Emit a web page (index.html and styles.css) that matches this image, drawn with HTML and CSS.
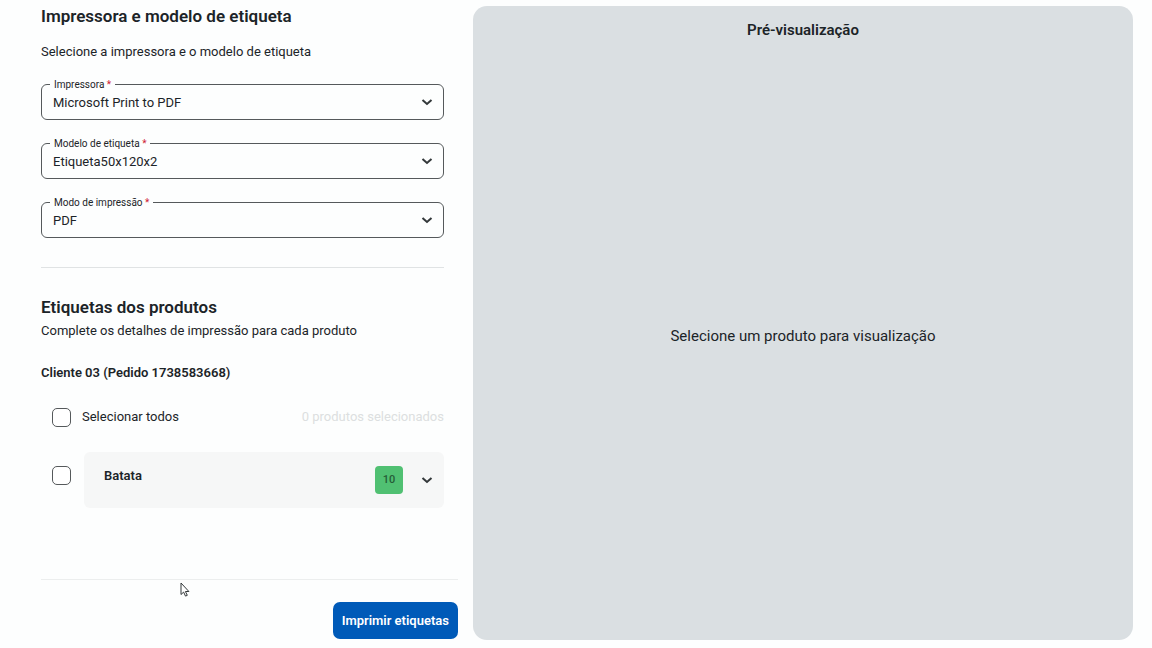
FILE: index.html
```html
<!DOCTYPE html>
<html lang="pt-BR">
<head>
    <meta charset="UTF-8">
    <meta name="viewport" content="width=device-width, initial-scale=1.0">
    <title>Imprimir etiquetas</title>
    <link rel="stylesheet" href="styles.css">
</head>
<body>
    <main class="page">
        <form class="settings">
            <div class="settings-content">
                <section class="printer">
                    <h1>Impressora e modelo de etiqueta</h1>
                    <p class="printer-intro">Selecione a impressora e o modelo de etiqueta</p>
                    <div class="fields">
                        <fieldset class="field">
                            <legend><label for="printer">Impressora <span class="required">*</span></label></legend>
                            <select id="printer" required>
                                <option>Microsoft Print to PDF</option>
                            </select>
                            <svg class="chevron" viewBox="0 0 12 12"><path d="M1.5 4L6 8l4.500-4"/></svg>
                        </fieldset>
                        <fieldset class="field">
                            <legend><label for="template">Modelo de etiqueta <span class="required">*</span></label></legend>
                            <select id="template" required>
                                <option>Etiqueta50x120x2</option>
                            </select>
                            <svg class="chevron" viewBox="0 0 12 12"><path d="M1.5 4L6 8l4.500-4"/></svg>
                        </fieldset>
                        <fieldset class="field">
                            <legend><label for="mode">Modo de impressão <span class="required">*</span></label></legend>
                            <select id="mode" required>
                                <option>PDF</option>
                            </select>
                            <svg class="chevron" viewBox="0 0 12 12"><path d="M1.5 4L6 8l4.500-4"/></svg>
                        </fieldset>
                    </div>
                </section>

                <section class="products">
                    <h2>Etiquetas dos produtos</h2>
                    <p>Complete os detalhes de impressão para cada produto</p>
                    <h3>Cliente 03 (Pedido 1738583668)</h3>
                    <div class="select-all">
                        <input type="checkbox" id="selectAll">
                        <label for="selectAll">Selecionar todos</label>
                        <span class="selected-count">0 produtos selecionados</span>
                    </div>
                    <div class="product">
                        <input type="checkbox" id="product1">
                        <div class="product-card">
                            <label for="product1">Batata</label>
                            <span class="quantity">10</span>
                            <button type="button" class="expand" aria-label="Expandir Batata">
                                <svg class="chevron" viewBox="0 0 12 12"><path d="M1.5 4L6 8l4.500-4"/></svg>
                            </button>
                        </div>
                    </div>
                </section>
            </div>

            <div class="actions">
                <button type="submit" class="print-btn">Imprimir etiquetas</button>
            </div>
        </form>

        <section class="preview">
            <h2>Pré-visualização</h2>
            <p>Selecione um produto para visualização</p>
        </section>
    </main>

    <svg class="pointer" viewBox="0 0 10 15"><path d="M1 1v11.5l2.6-2.4 1.9 4 1.8-.8-1.9-3.8h3.5z"/></svg>
</body>
</html>
```

FILE: styles.css
```css
* {
    box-sizing: border-box;
}

body {
    margin: 0;
    font-family: Roboto, sans-serif;
    font-size: 13px;
    line-height: 20px;
    color: #1c2428;
    background-color: #fdfefe;
}

h1, h2, h3, p {
    margin: 0;
}

h1, h2 {
    font-size: 17px;
    font-weight: 600;
    line-height: 24px;
}

h3 {
    font-size: 13px;
    font-weight: 600;
    line-height: 20px;
}

.page {
    display: grid;
    grid-template-columns: 139fr 220fr;
    gap: 15px;
    min-height: 100vh;
    padding: 6px 19px 8px 41px;
}

.settings {
    display: flex;
    flex-direction: column;
    justify-content: space-between;
}

.settings-content {
    padding-right: 14px;
}

.printer {
    padding-bottom: 29px;
    border-bottom: 1px solid #e0e3e4;
}

.printer h1 {
    margin-top: -2px;
}

.printer-intro {
    margin: 14px 0 16px;
}

.fields {
    display: flex;
    flex-direction: column;
    gap: 17px;
}

.field {
    position: relative;
    min-width: 0;
    height: 42px;
    margin: 0;
    padding: 0;
    border: 1px solid #55595b;
    border-radius: 6px;
}

.field legend {
    margin-left: 8px;
    padding: 0 4px;
    font-size: 10px;
    line-height: 13px;
}

.required {
    color: #cf2233;
}

.field select {
    display: block;
    width: 100%;
    height: 24px;
    padding: 0 40px 0 11px;
    border: none;
    appearance: none;
    background: transparent;
    font: inherit;
    color: inherit;
}

.chevron {
    width: 12px;
    height: 12px;
    fill: none;
    stroke: #33383a;
    stroke-width: 2;
}

.field .chevron {
    position: absolute;
    right: 10px;
    top: 5px;
    pointer-events: none;
}

.products {
    padding-top: 27px;
}

.products h3 {
    margin: 22px 0 24px;
}

.products h2 {
    margin-bottom: 2px;
}

input[type="checkbox"] {
    appearance: none;
    flex: none;
    width: 19px;
    height: 19px;
    margin: 0;
    border: 1px solid #55595b;
    border-radius: 5px;
    background-color: #fff;
}

input[type="checkbox"]:checked {
    background-color: #005ab8;
}

.select-all {
    display: flex;
    align-items: center;
    gap: 11px;
    padding-left: 11px;
}

.selected-count {
    margin-left: auto;
    color: #dcdfe0;
}

.product {
    display: flex;
    align-items: center;
    gap: 13px;
    margin-top: 25px;
    padding-left: 11px;
}

.product input[type="checkbox"] {
    margin-bottom: 9px;
}

.product-card {
    display: flex;
    flex: 1;
    align-items: center;
    height: 56px;
    padding: 0 11px 0 20px;
    border-radius: 6px;
    background-color: #f6f7f7;
}

.product-card label {
    flex: 1;
    padding-bottom: 8px;
    font-weight: 600;
}

.quantity {
    width: 28px;
    border-radius: 4px;
    background-color: #50c072;
    color: #255c37;
    font-size: 11px;
    font-weight: 500;
    line-height: 28px;
    text-align: center;
}

.expand {
    display: flex;
    margin-left: 18px;
    padding: 0;
    border: none;
    background: none;
    cursor: pointer;
}

.actions {
    display: flex;
    justify-content: flex-end;
    padding: 22px 0 1px;
    border-top: 1px solid #eceeee;
}

.print-btn {
    height: 37px;
    padding: 0 9px;
    border: none;
    border-radius: 7px;
    background-color: #005ab8;
    color: #fff;
    font: inherit;
    font-weight: 600;
    cursor: pointer;
}

.preview {
    display: flex;
    flex-direction: column;
    padding: 12px 12px 10px;
    border-radius: 14px;
    background-color: #dadfe2;
    text-align: center;
}

.preview h2 {
    font-size: 15px;
}

.preview p {
    margin: auto 0;
    font-size: 15px;
}

/* mouse pointer resting over the form */
.pointer {
    position: absolute;
    left: 180px;
    top: 582px;
    width: 10px;
    height: 15px;
    fill: #fff;
    stroke: #33383a;
    stroke-width: 1;
    pointer-events: none;
}
```
